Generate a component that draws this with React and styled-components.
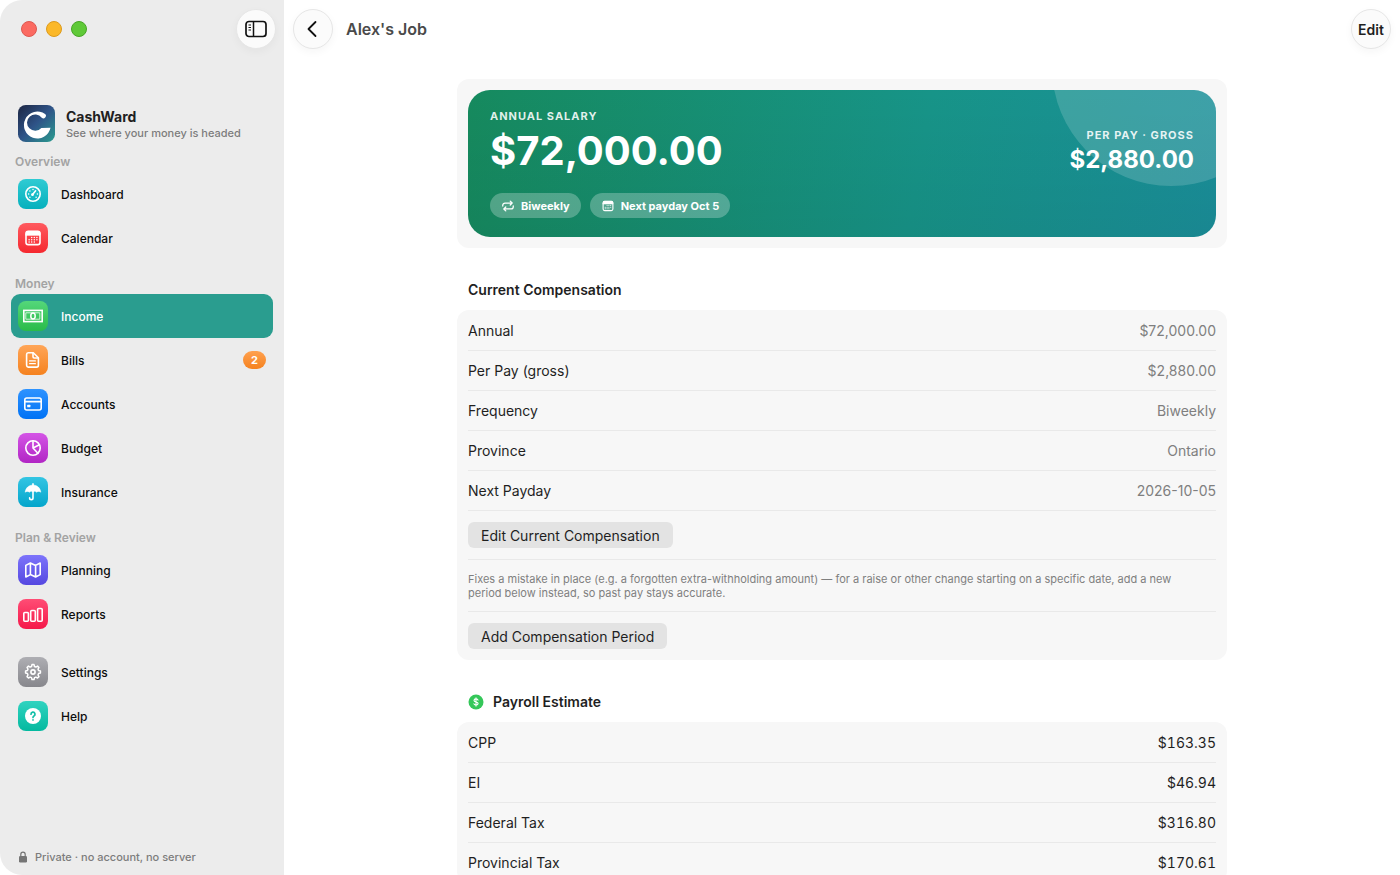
import React, { useState } from 'react';
import styled, { createGlobalStyle } from 'styled-components';

// page wide defaults
const GlobalStyle = createGlobalStyle`
	* {
		box-sizing: border-box;
	}
	body {
		margin: 0;
		background: #ffffff;
		color: #1f1f1f;
		font-family: Inter, "Liberation Sans", sans-serif;
		font-size: 14px;
	}
	button {
		font-family: inherit;
		cursor: pointer;
	}
`;

const Window = styled.div`
	display: grid;
	grid-template-columns: 284px 1fr;
	height: 100vh;
`;

// left side of the window
const Sidebar = styled.aside`
	display: flex;
	flex-direction: column;
	background: #ececec;
	border-radius: 22px 0 0 22px;
	overflow: hidden;
`;

const TitleBar = styled.div`
	display: flex;
	align-items: center;
	height: 58px;
	padding: 0 8px 0 21px;
`;

const TrafficLights = styled.div`
	display: flex;
	gap: 9px;
	margin-right: auto;
`;

const Light = styled.button`
	width: 16px;
	height: 16px;
	padding: 0;
	border-radius: 50%;
	border: 1px solid ${({ $edge }) => $edge};
	background: ${({ $color }) => $color};
`;

const RoundButton = styled.button`
	display: flex;
	align-items: center;
	justify-content: center;
	width: 40px;
	height: 40px;
	padding: 0;
	border: 1px solid #e6e6e6;
	border-radius: 50%;
	background: #fbfbfb;
	color: #1f1f1f;
	font-size: 14px;
	font-weight: 600;
	box-shadow: 0 3px 8px rgba(0, 0, 0, 0.04);
`;

const Brand = styled.div`
	display: flex;
	align-items: center;
	gap: 11px;
	padding: 47px 18px 10px;
`;

const BrandName = styled.div`
	font-size: 14px;
	line-height: 18px;
	font-weight: 700;
`;

const Tagline = styled.div`
	font-size: 11px;
	line-height: 14px;
	font-weight: 500;
	color: #7c7c7c;
`;

const Nav = styled.nav`
	display: flex;
	flex-direction: column;
	gap: 14px;
	padding: 0 11px;
`;

const NavTitle = styled.h2`
	margin: 0;
	padding-left: 4px;
	font-size: 12px;
	line-height: 20px;
	font-weight: 600;
	color: #a3a3a3;
`;

const NavItem = styled.a`
	display: flex;
	align-items: center;
	gap: 13px;
	height: 44px;
	padding: 0 7px;
	border-radius: 9px;
	font-size: 12px;
	font-weight: 500;
	text-decoration: none;
	color: ${({ $active }) => ($active ? '#ffffff' : '#0d0d0d')};
	background: ${({ $active }) => ($active ? '#2a9d8f' : 'transparent')};
`;

const Tile = styled.span`
	display: flex;
	align-items: center;
	justify-content: center;
	width: 30px;
	height: 30px;
	border-radius: 8px;
	background: linear-gradient(${({ $from, $to }) => `${$from}, ${$to}`});
`;

const Badge = styled.span`
	margin-left: auto;
	padding: 0 8px;
	border-radius: 9px;
	background: linear-gradient(#ffa14f, #f5821f);
	color: #ffffff;
	font-size: 11px;
	line-height: 18px;
	font-weight: 700;
`;

const PrivacyNote = styled.div`
	display: flex;
	align-items: center;
	gap: 8px;
	margin-top: auto;
	padding: 0 19px 11px;
	font-size: 11px;
	line-height: 14px;
	font-weight: 500;
	color: #7c7c7c;
`;

// right side of the window
const Main = styled.main`
	display: flex;
	flex-direction: column;
	min-width: 0;
	min-height: 0;
`;

const Toolbar = styled.header`
	display: flex;
	flex-shrink: 0;
	align-items: center;
	gap: 13px;
	height: 58px;
	padding: 0 9px;
`;

const PageTitle = styled.h1`
	flex: 1;
	margin: 0;
	font-size: 16px;
	font-weight: 600;
	line-height: 20px;
	color: #4a4a4a;
`;

const Content = styled.div`
	flex: 1;
	overflow-y: auto;
	scrollbar-width: none;
	padding: 21px 20px;
`;

const Column = styled.div`
	max-width: 770px;
	margin: 0 auto;
`;

const Panel = styled.section`
	padding: 1px 11px 0;
	border-radius: 12px;
	background: #f7f7f7;
`;

const HeroPanel = styled(Panel)`
	padding: 11px;
`;

const Hero = styled.div`
	position: relative;
	padding: 18px 22px 19px;
	border-radius: 22px;
	overflow: hidden;
	color: #ffffff;
	background: linear-gradient(rgba(0, 0, 0, 0), rgba(0, 0, 0, 0.06)),
		linear-gradient(100deg, #168a5e, #179488 60%, #1a8f9a);
`;

const HeroCircle = styled.span`
	position: absolute;
	top: -142px;
	right: -74px;
	width: 238px;
	height: 238px;
	border-radius: 50%;
	background: rgba(255, 255, 255, 0.16);
`;

const HeroFigures = styled.div`
	position: relative;
	display: flex;
	align-items: flex-end;
	justify-content: space-between;
`;

const HeroFigure = styled.div`
	text-align: ${({ $align }) => $align || 'left'};
`;

const HeroLabel = styled.div`
	font-size: 11px;
	line-height: 16px;
	font-weight: 700;
	letter-spacing: 1px;
	color: rgba(255, 255, 255, 0.88);
`;

const HeroAmount = styled.div`
	font-size: ${({ $size }) => $size}px;
	line-height: ${({ $line }) => $line}px;
	font-weight: 700;
`;

const Pills = styled.div`
	position: relative;
	display: flex;
	gap: 9px;
	margin-top: 16px;
`;

const Pill = styled.span`
	display: flex;
	align-items: center;
	gap: 6px;
	height: 25px;
	padding: 0 11px;
	border-radius: 13px;
	background: rgba(255, 255, 255, 0.26);
	font-size: 11px;
	font-weight: 700;
`;

const SectionTitle = styled.h2`
	display: flex;
	align-items: center;
	gap: 9px;
	margin: 32px 11px 10px;
	font-size: 14px;
	line-height: 20px;
	font-weight: 600;
`;

const Rows = styled.dl`
	margin: 0;
`;

const Row = styled.div`
	display: flex;
	align-items: center;
	justify-content: space-between;
	height: 40px;
	border-bottom: 1px solid #e9e9e9;

	dd {
		margin: 0;
		font-variant-numeric: ${({ $strong }) => ($strong ? 'tabular-nums' : 'normal')};
		color: ${({ $strong }) => ($strong ? '#1f1f1f' : '#7f7f7f')};
	}
`;

const ActionRow = styled.div`
	padding: 11px 0;
	border-bottom: ${({ $last }) => ($last ? 'none' : '1px solid #e9e9e9')};
`;

const GrayButton = styled.button`
	display: block;
	height: 26px;
	padding: 0 13px;
	border: none;
	border-radius: 6px;
	background: #e3e3e3;
	color: #1f1f1f;
	font-size: 14px;
`;

const Note = styled.p`
	margin: 0;
	padding: 12px 16px 11px 0;
	border-bottom: 1px solid #e9e9e9;
	font-size: 11px;
	line-height: 14px;
	color: #7f7f7f;
`;

// all icons are drawn in a 20x20 box
const Icon = ({ size = 20, width = 1.6, children }) => (
	<svg
		width={size}
		height={size}
		viewBox="0 0 20 20"
		fill="none"
		stroke="currentColor"
		strokeWidth={width}
		strokeLinecap="round"
		strokeLinejoin="round"
		color="#ffffff"
		aria-hidden="true"
	>
		{children}
	</svg>
);

const GaugeIcon = () => (
	<Icon>
		<circle cx="10" cy="10" r="7.2" />
		<path d="M9.6 10.6 12.6 6.8" />
		<circle cx="9.5" cy="10.7" r="1.4" fill="currentColor" stroke="none" />
		<path
			strokeWidth="1.5"
			d="M5.6 10h.01M6.9 6.9h.01M10 5.6h.01M14.4 10h.01M13.1 13.2h.01M6.9 13.2h.01"
		/>
	</Icon>
);

const CalendarIcon = ({ size }) => (
	<Icon size={size}>
		<rect x="3" y="3.4" width="14" height="13.2" rx="2.2" />
		<path d="M3 5.2A1.8 1.8 0 0 1 5 3.4h10a1.8 1.8 0 0 1 2 1.8v2H3z" fill="currentColor" strokeWidth="0.8" />
		<path
			strokeWidth="1.5"
			d="M8.7 9.4h.01M11.3 9.4h.01M13.9 9.4h.01M6.1 11.7h.01M8.7 11.7h.01M11.3 11.7h.01M13.9 11.7h.01M6.1 14h.01M8.7 14h.01M11.3 14h.01"
		/>
	</Icon>
);

const BanknoteIcon = () => (
	<Icon>
		<rect x="0.8" y="4.4" width="18.4" height="11.2" strokeLinejoin="miter" />
		<rect x="3.2" y="6.8" width="13.6" height="6.4" strokeWidth="1" opacity="0.75" />
		<ellipse cx="10" cy="10" rx="2.2" ry="3" strokeWidth="1.5" />
	</Icon>
);

const DocIcon = () => (
	<Icon>
		<path d="M5.2 2.8h5.1l5.1 5v7.5a1.8 1.8 0 0 1-1.8 1.8H5.2a1.8 1.8 0 0 1-1.6-1.8V4.6a1.8 1.8 0 0 1 1.6-1.8z" />
		<path d="M10 3v3.8a1.2 1.2 0 0 0 1.2 1.2H15" />
		<path d="M6.6 10.9h5.8M6.6 13.7h5.8" strokeWidth="1.2" />
	</Icon>
);

const CardIcon = () => (
	<Icon>
		<rect x="1.8" y="4" width="16.4" height="12" rx="2" />
		<path d="M1.8 7.6h16.4" />
		<rect x="4.2" y="10.8" width="3.2" height="2.4" rx="0.5" fill="currentColor" stroke="none" />
	</Icon>
);

const PieIcon = () => (
	<Icon>
		<circle cx="10" cy="10" r="7.2" />
		<path d="M10 2.8V10l4.9 5.3M10 10l6.4-3.2" />
	</Icon>
);

const UmbrellaIcon = () => (
	<Icon>
		<path
			d="M10 3C5.8 3 2.6 6 2.2 10.2c1-1 3.2-1 4.2 0 1-1.2 2.6-1.2 3.6-.2 1-1 2.6-1 3.6.2 1-1 3.2-1 4.2 0C17.4 6 14.2 3 10 3z"
			fill="currentColor"
			strokeWidth="0.5"
		/>
		<path d="M10 1.9v14a1.7 1.7 0 0 1-3.4 0" />
	</Icon>
);

const MapIcon = () => (
	<Icon>
		<path d="M2.8 5.4 7.4 3l5.2 2.4L17.2 3v11.6L12.6 17l-5.2-2.4L2.8 17zM7.4 3v11.6M12.6 5.4V17" />
	</Icon>
);

const BarsIcon = () => (
	<Icon>
		<rect x="0.8" y="8.5" width="4.6" height="8.7" rx="1" />
		<rect x="7.7" y="6.5" width="4.6" height="10.7" rx="1" />
		<rect x="14.6" y="4.5" width="4.6" height="12.7" rx="1" />
	</Icon>
);

const GearIcon = () => (
	<Icon>
		<circle cx="10" cy="10" r="2.1" />
		<path
			d="M8.9 2.6h2.2l.5 2 1.5.6 1.8-1 1.5 1.5-1 1.8.6 1.5 2 .5v2.2l-2 .5-.6 1.5 1 1.8-1.5 1.5-1.8-1-1.5.6-.5 2H8.9l-.5-2-1.5-.6-1.8 1-1.5-1.5 1-1.8-.6-1.5-2-.5V9.5l2-.5.6-1.5-1-1.8 1.5-1.5 1.8 1 1.5-.6z"
			transform="translate(.7 .2) scale(.93)"
		/>
	</Icon>
);

const HelpIcon = () => (
	<Icon>
		<circle cx="10" cy="10" r="8" fill="currentColor" stroke="none" />
		<path d="M8 8.2a2 2 0 1 1 3 1.7c-.7.4-1 .7-1 1.5M10 13.9h.01" stroke="#12bfa8" strokeWidth="1.7" />
	</Icon>
);

const RepeatIcon = () => (
	<Icon size={14} width={1.8}>
		<path d="M2.5 10V9A3.2 3.2 0 0 1 5.7 5.8H16M13.2 3 16 5.8l-2.8 2.8" />
		<path d="M17.5 10v1a3.2 3.2 0 0 1-3.2 3.2H4M6.8 11.4 4 14.2 6.8 17" />
	</Icon>
);

const LogoIcon = () => (
	<svg width="37" height="37" viewBox="0 0 38 38" aria-hidden="true">
		<defs>
			<linearGradient id="logo" x1="0" y1="0" x2="1" y2="1">
				<stop offset="0" stopColor="#1c2542" />
				<stop offset="0.5" stopColor="#2f5488" />
				<stop offset="1" stopColor="#2a9d8f" />
			</linearGradient>
		</defs>
		<rect width="38" height="38" rx="8" fill="url(#logo)" />
		<path
			fill="#ffffff"
			d="M27.8 9.3A13.8 13.8 0 1 0 33.4 23.4L24 23.6A8.4 8.4 0 1 1 24.4 13A2.5 2.5 0 0 0 27.8 9.3z"
		/>
	</svg>
);

const SidebarIcon = () => (
	<svg width="22" height="18" viewBox="0 0 22 18" fill="none" stroke="#111111" aria-hidden="true">
		<rect x="1" y="1.5" width="20" height="15" rx="3" strokeWidth="1.7" />
		<path d="M8.5 1.5v15" strokeWidth="1.5" />
		<path d="M3.5 5h2.5M3.5 7.5h2.5M3.5 10h2.5" strokeWidth="1" />
	</svg>
);

const ChevronIcon = () => (
	<svg width="18" height="18" viewBox="0 0 18 18" fill="none" stroke="#111111" strokeWidth="1.8" strokeLinecap="round" strokeLinejoin="round" aria-hidden="true">
		<path d="M11.5 2 4.5 9l7 7" />
	</svg>
);

const LockIcon = () => (
	<svg width="8" height="12" viewBox="0 0 8 12" aria-hidden="true">
		<path d="M1.8 6V3.4a2.2 2.2 0 0 1 4.4 0V6" fill="none" stroke="#757575" strokeWidth="1.2" />
		<rect y="5" width="8" height="6.5" rx="1.2" fill="#757575" />
	</svg>
);

const DollarIcon = () => (
	<svg width="16" height="16" viewBox="0 0 16 16" aria-hidden="true">
		<circle cx="8" cy="8" r="7.5" fill="#34c759" />
		<path
			d="M10 6.1C9.8 5.3 9 4.9 8 4.9c-1.2 0-2 .6-2 1.5 0 2.1 4.1 1 4.1 3.2 0 .9-.9 1.5-2.1 1.5S6 10.6 5.9 9.8M8 3.9v8.2"
			fill="none"
			stroke="#ffffff"
			strokeWidth="1.1"
			strokeLinecap="round"
		/>
	</svg>
);

const navGroups = [
	{
		title: 'Overview',
		items: [
			{ name: 'Dashboard', icon: GaugeIcon, from: '#2fcbd3', to: '#06b0bd' },
			{ name: 'Calendar', icon: CalendarIcon, from: '#ff5a5f', to: '#f5282f' },
		],
	},
	{
		title: 'Money',
		items: [
			{ name: 'Income', icon: BanknoteIcon, from: '#54d77a', to: '#2abb49' },
			{ name: 'Bills', icon: DocIcon, from: '#ffa557', to: '#f5821f', badge: 2 },
			{ name: 'Accounts', icon: CardIcon, from: '#2e93ff', to: '#0072f5' },
			{ name: 'Budget', icon: PieIcon, from: '#d455e6', to: '#b125c4' },
			{ name: 'Insurance', icon: UmbrellaIcon, from: '#33c5e3', to: '#04a5cb' },
		],
	},
	{
		title: 'Plan & Review',
		items: [
			{ name: 'Planning', icon: MapIcon, from: '#7d74fb', to: '#5548e0' },
			{ name: 'Reports', icon: BarsIcon, from: '#ff4d75', to: '#f5184a' },
		],
	},
	{
		items: [
			{ name: 'Settings', icon: GearIcon, from: '#aeaeb3', to: '#87878c' },
			{ name: 'Help', icon: HelpIcon, from: '#30d3c0', to: '#04b99f' },
		],
	},
];

const compensation = [
	['Annual', '$72,000.00'],
	['Per Pay (gross)', '$2,880.00'],
	['Frequency', 'Biweekly'],
	['Province', 'Ontario'],
	['Next Payday', '2026-10-05'],
];

const payroll = [
	['CPP', '$163.35'],
	['EI', '$46.94'],
	['Federal Tax', '$316.80'],
	['Provincial Tax', '$170.61'],
];

// Main component with the sidebar and the income details
const App = () => {
	const [selected, setSelected] = useState('Income');

	return (
		<Window>
			<GlobalStyle />
			<Sidebar>
				<TitleBar>
					<TrafficLights>
						<Light $color="#fb6a61" $edge="#dd5850" aria-label="Close" />
						<Light $color="#fbb829" $edge="#dc9a1c" aria-label="Minimize" />
						<Light $color="#5fc938" $edge="#47a526" aria-label="Zoom" />
					</TrafficLights>
					<RoundButton aria-label="Toggle sidebar">
						<SidebarIcon />
					</RoundButton>
				</TitleBar>
				<Brand>
					<LogoIcon />
					<div>
						<BrandName>CashWard</BrandName>
						<Tagline>See where your money is headed</Tagline>
					</div>
				</Brand>
				<Nav>
					{navGroups.map((group, index) => (
						<div key={index}>
							{group.title && <NavTitle>{group.title}</NavTitle>}
							{group.items.map(({ name, icon: ItemIcon, from, to, badge }) => (
								<NavItem
									key={name}
									href={`#${name.toLowerCase()}`}
									$active={name === selected}
									onClick={() => setSelected(name)}
								>
									<Tile $from={from} $to={to}>
										<ItemIcon />
									</Tile>
									{name}
									{badge && <Badge>{badge}</Badge>}
								</NavItem>
							))}
						</div>
					))}
				</Nav>
				<PrivacyNote>
					<LockIcon />
					Private · no account, no server
				</PrivacyNote>
			</Sidebar>
			<Main>
				<Toolbar>
					<RoundButton aria-label="Back">
						<ChevronIcon />
					</RoundButton>
					<PageTitle>Alex's Job</PageTitle>
					<RoundButton>Edit</RoundButton>
				</Toolbar>
				<Content>
					<Column>
						<HeroPanel>
							<Hero>
								<HeroCircle />
								<HeroFigures>
									<HeroFigure>
										<HeroLabel>ANNUAL SALARY</HeroLabel>
										<HeroAmount $size={40} $line={53}>
											$72,000.00
										</HeroAmount>
									</HeroFigure>
									<HeroFigure $align="right">
										<HeroLabel>PER PAY · GROSS</HeroLabel>
										<HeroAmount $size={24} $line={34}>
											$2,880.00
										</HeroAmount>
									</HeroFigure>
								</HeroFigures>
								<Pills>
									<Pill>
										<RepeatIcon />
										Biweekly
									</Pill>
									<Pill>
										<CalendarIcon size={14} />
										Next payday Oct 5
									</Pill>
								</Pills>
							</Hero>
						</HeroPanel>

						<SectionTitle>Current Compensation</SectionTitle>
						<Panel>
							<Rows>
								{compensation.map(([label, value]) => (
									<Row key={label}>
										<dt>{label}</dt>
										<dd>{value}</dd>
									</Row>
								))}
							</Rows>
							<ActionRow>
								<GrayButton>Edit Current Compensation</GrayButton>
							</ActionRow>
							<Note>
								Fixes a mistake in place (e.g. a forgotten extra-withholding
								amount) — for a raise or other change starting on a specific
								date, add a new period below instead, so past pay stays
								accurate.
							</Note>
							<ActionRow $last>
								<GrayButton>Add Compensation Period</GrayButton>
							</ActionRow>
						</Panel>

						<SectionTitle>
							<DollarIcon />
							Payroll Estimate
						</SectionTitle>
						<Panel>
							<Rows>
								{payroll.map(([label, value]) => (
									<Row key={label} $strong>
										<dt>{label}</dt>
										<dd>{value}</dd>
									</Row>
								))}
							</Rows>
						</Panel>
					</Column>
				</Content>
			</Main>
		</Window>
	);
};

export default App;
